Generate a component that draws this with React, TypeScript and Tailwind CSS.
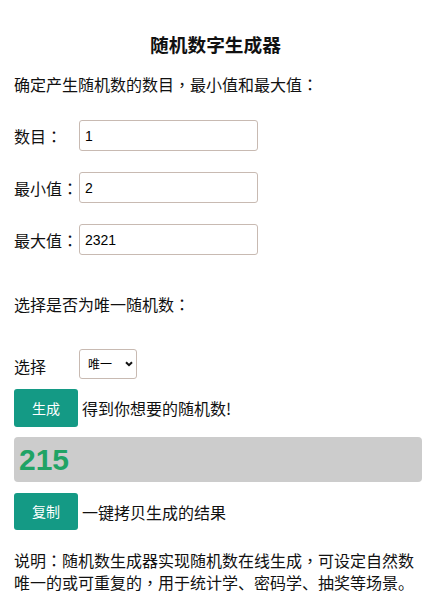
import { useState } from "react";

// Random number generator page: inputs for count / min / max, a unique switch,
// the generated result and a copy button.

const CJK = "font-['Noto_Sans_CJK_SC','Noto_Sans',sans-serif]";

// full-width colon / comma sit centered in the reference, as in the TC font
function P({ c }: { c: string }) {
  return <span className="font-['Noto_Sans_CJK_TC',sans-serif]">{c}</span>;
}

function Field({ label, value }: { label: string; value: string }) {
  return (
    <div className="flex items-center">
      <label className="w-[65px] shrink-0 text-[16px] leading-[24px]">
        {label}
        <P c="：" />
      </label>
      <input
        defaultValue={value}
        className="h-[31px] w-[179px] rounded-[3px] border border-[#c8bab2] bg-white px-[5px] font-['Liberation_Sans',Arial,sans-serif] text-[14px] text-black outline-none"
      />
    </div>
  );
}

export default function App() {
  const [result] = useState("215");

  return (
    <div className={`min-h-screen bg-white px-[14px] text-[#111] ${CJK}`}>
      <h3 className="pt-[32px] text-center text-[18.7px] font-bold leading-[24px]">随机数字生成器</h3>

      <p className="mt-[16px] text-[16px] leading-[24px]">
        确定产生随机数的数目<P c="，" />最小值和最大值<P c="：" />
      </p>

      {/* count / min / max */}
      <div className="mt-[24px] flex flex-col gap-[21px]">
        <Field label="数目" value="1" />
        <Field label="最小值" value="2" />
        <Field label="最大值" value="2321" />
      </div>

      <p className="mt-[37px] text-[16px] leading-[24px]">
        选择是否为唯一随机数<P c="：" />
      </p>

      <div className="mt-[33px] flex items-center">
        <span className="w-[65px] shrink-0 pt-[3px] text-[16px] leading-[24px]">选择</span>
        <div className="relative">
          <select className="h-[30px] w-[58px] appearance-none rounded-[3px] border border-[#c8bab2] bg-white pl-[8px] text-[12px] text-black outline-none">
            <option>唯一</option>
            <option>可重复</option>
          </select>
          <svg
            className="pointer-events-none absolute right-[4px] top-[12px]"
            width="8"
            height="6"
            viewBox="0 0 8 6"
          >
            <path d="M1 1.2 L4 4.2 L7 1.2" fill="none" stroke="#111" strokeWidth="2" />
          </svg>
        </div>
      </div>

      {/* generate */}
      <div className="mt-[10px] flex items-center gap-[4px]">
        <button className="h-[38px] w-[64px] rounded-[3px] bg-[#149a85] text-[14px] text-white">生成</button>
        <span className="text-[16px] leading-[24px]">得到你想要的随机数!</span>
      </div>

      {/* result */}
      <div className="mt-[10px] flex h-[45px] w-[408px] items-center rounded-[4px] bg-[#cccccc] px-[5px]">
        <span className="font-['Liberation_Sans',Arial,sans-serif] text-[30px] font-bold leading-none text-[#20a365]">
          {result}
        </span>
      </div>

      {/* copy */}
      <div className="mt-[11px] flex items-center gap-[4px]">
        <button className="h-[37px] w-[64px] rounded-[3px] bg-[#149a85] text-[14px] text-white">复制</button>
        <span className="text-[16px] leading-[24px]">一键拷贝生成的结果</span>
      </div>

      <p className="mt-[19px] text-[16px] leading-[22px]">
        说明<P c="：" />随机数生成器实现随机数在线生成<P c="，" />可设定自然数唯一的或可重复的<P c="，" />
        用于统计学、密码学、抽奖等场景。
      </p>
    </div>
  );
}
